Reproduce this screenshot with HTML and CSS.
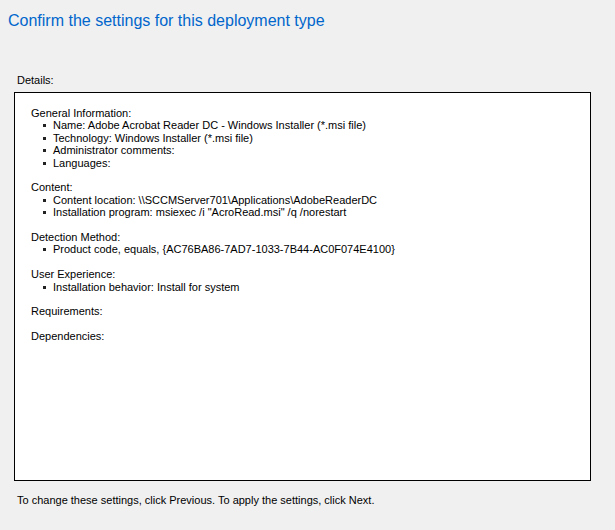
FILE: index.html
```html
<!DOCTYPE html>
<html>
<head>
<meta charset="utf-8">
<link rel="stylesheet" href="styles.css">
</head>
<body>
<div class="page">
  <h1 class="title">Confirm the settings for this deployment type</h1>
  <div class="label">Details:</div>
  <div class="details">
    <div class="section">
      <div class="heading">General Information:</div>
      <ul>
        <li>Name: Adobe Acrobat Reader DC - Windows Installer (*.msi file)</li>
        <li>Technology: Windows Installer (*.msi file)</li>
        <li>Administrator comments:</li>
        <li>Languages:</li>
      </ul>
    </div>
    <div class="section">
      <div class="heading">Content:</div>
      <ul>
        <li>Content location: \\SCCMServer701\Applications\AdobeReaderDC</li>
        <li>Installation program: msiexec /i "AcroRead.msi" /q /norestart</li>
      </ul>
    </div>
    <div class="section">
      <div class="heading">Detection Method:</div>
      <ul>
        <li>Product code, equals, {AC76BA86-7AD7-1033-7B44-AC0F074E4100}</li>
      </ul>
    </div>
    <div class="section">
      <div class="heading">User Experience:</div>
      <ul>
        <li>Installation behavior: Install for system</li>
      </ul>
    </div>
    <div class="section">
      <div class="heading">Requirements:</div>
    </div>
    <div class="section">
      <div class="heading">Dependencies:</div>
    </div>
  </div>
  <div class="footer">To change these settings, click Previous. To apply the settings, click Next.</div>
</div>
</body>
</html>
```
FILE: styles.css
```css
html, body {
  margin: 0;
  padding: 0;
  background: #f0f0f0;
}
.page {
  width: 615px;
  height: 530px;
  font-family: "Liberation Sans", Arial, sans-serif;
  font-size: 11px;
  color: #000;
  display: flex;
  flex-direction: column;
}
.title {
  margin: 0;
  padding: 11px 0 0 8px;
  font-size: 16px;
  font-weight: normal;
  color: #0066cc;
  line-height: 20px;
}
.label {
  margin: 43px 0 0 17px;
  line-height: 13px;
}
.details {
  margin: 5px 0 0 14px;
  width: 577px;
  height: 389px;
  border: 1px solid #000;
  background: #fff;
  padding: 14px 0 0 16px;
  box-sizing: border-box;
  display: flex;
  flex-direction: column;
  gap: 12.4px;
  line-height: 12.4px;
}
.details ul {
  margin: 0;
  padding: 0 0 0 22px;
  list-style: none;
}
.details li {
  position: relative;
}
.details li::before {
  content: "";
  position: absolute;
  left: -10px;
  top: 5px;
  width: 3px;
  height: 3px;
  background: #222;
}
.footer {
  margin: 13px 0 0 17px;
  line-height: 13px;
}
```
